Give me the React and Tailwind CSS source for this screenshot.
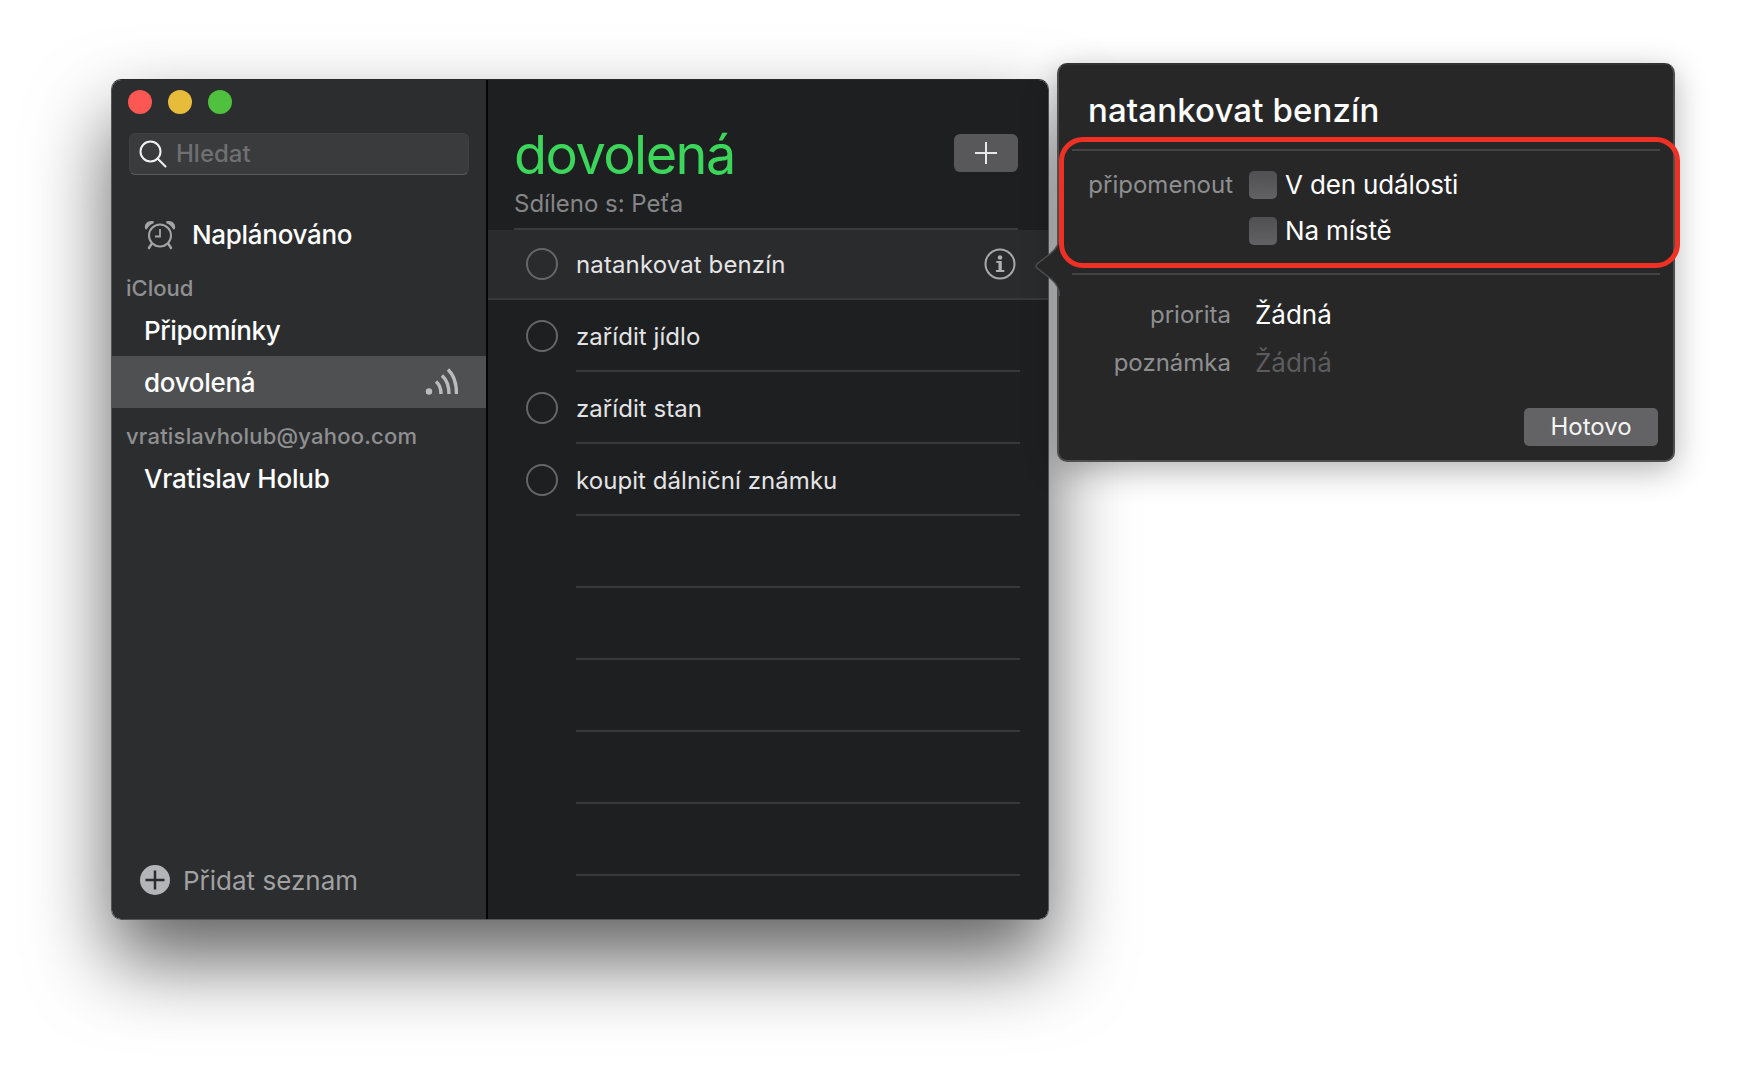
import React from "react";

function SearchIcon() {
  return (
    <svg width="28" height="28" viewBox="0 0 28 28" fill="none" stroke="#f2f2f2" strokeWidth="2" strokeLinecap="round">
      <circle cx="11.500" cy="11.500" r="10" />
      <path d="M18.500 18.500l8 8" />
    </svg>
  );
}

function AlarmIcon() {
  return (
    <svg width="32" height="30" viewBox="0 0 32 30" fill="none">
      <path d="M1 8.500C0 3.500 4 0 9.500 1.200 10 1.600 10 2.600 9.500 3.200 6.500 4.500 4.500 6.200 3 9 2.400 9.800 1.300 9.500 1 8.500z" fill="#a4a4a4" />
      <path d="M31 8.500C32 3.500 28 0 22.500 1.200 22 1.600 22 2.600 22.500 3.200 25.500 4.500 27.500 6.200 29 9 29.600 9.800 30.700 9.500 31 8.500z" fill="#a4a4a4" />
      <circle cx="16" cy="15.500" r="11" stroke="#a4a4a4" strokeWidth="2" />
      <path d="M16 9v7.500h-5" stroke="#a4a4a4" strokeWidth="1.800" />
      <path d="M7.500 24l-2.500 4M24.500 24l2.500 4" stroke="#a4a4a4" strokeWidth="2.400" strokeLinecap="round" />
    </svg>
  );
}

function SignalIcon() {
  return (
    <svg width="33" height="28" viewBox="0 0 33 28" fill="none" stroke="#bcbcbc" strokeWidth="3.400">
      <circle cx="4" cy="23.500" r="3.200" fill="#bcbcbc" stroke="none" />
      <path d="M11 13.500c3.500 3 5 7 5 12.500" />
      <path d="M17 7.500c5 4.500 7 10 7 18.500" />
      <path d="M23 1.500c6.500 6 8.500 14 8.500 24.500" />
    </svg>
  );
}

function InfoIcon() {
  return (
    <svg width="32" height="32" viewBox="0 0 32 32" fill="#b0b0b0">
      <circle cx="16" cy="16" r="14.500" fill="none" stroke="#a8a8a8" strokeWidth="2" />
      <circle cx="16" cy="9.500" r="2.300" />
      <rect x="14.500" y="13" width="3.300" height="10" />
      <rect x="12.300" y="13" width="4" height="1.900" />
      <rect x="12" y="22" width="8.300" height="2" />
    </svg>
  );
}

function Tail() {
  return (
    <svg width="26" height="60" viewBox="0 0 26 60" className="absolute left-[-24px] top-[171px]">
      <path d="M24.500 0C24.500 8 21 13 16 17L2 28C0.800 29.200 0.800 30.800 2 32L16 43C21 47 24.500 52 24.500 60V0Z" fill="#272728" />
      <path d="M24.500 0C24.500 8 21 13 16 17L2 28C0.800 29.200 0.800 30.800 2 32L16 43C21 47 24.500 52 24.500 60" fill="none" stroke="#4e4e50" strokeWidth="1.500" />
    </svg>
  );
}

const lists = ["natankovat benzín", "zařídit jídlo", "zařídit stan", "koupit dálniční známku", "", "", "", "", ""];

function Row({ text, index }) {
  const first = index === 0;
  return (
    <div className={first ? "h-[70px] flex bg-[#2a2b2d] border-b-2 border-[#38393b]" : "h-[72px] flex"}>
      <div className="w-[88px] flex items-center justify-center pl-[20px]">
        {text && <div className="w-[32px] h-[32px] rounded-full border-2 border-[#666668]" />}
      </div>
      <div className={first ? "flex-1 flex items-center justify-between pr-[32px]" : "flex-1 mr-[28px] flex items-center border-b-2 border-[#38393b]"}>
        <span className={first ? "text-[24px] leading-none tracking-[0.12px] text-[#e4e4e6] pt-[2px]" : "text-[24px] leading-none tracking-[0.06px] text-[#e4e4e6] pt-[4px]"}>{text}</span>
        {first && <InfoIcon />}
      </div>
    </div>
  );
}

export default function App() {
  return (
    <div className="relative w-[1746px] h-[1068px] bg-white overflow-hidden font-['Inter','Noto_Sans',sans-serif]">
      {/* main window */}
      <div className="absolute left-[111px] top-[79px] w-[938px] h-[841px] flex rounded-[10px] overflow-hidden border border-[#555557] border-t-[#2a2a2a] shadow-[0_40px_80px_rgba(0,0,0,0.62)]">
        <aside className="w-[374px] bg-[#2c2d2f] flex flex-col">
          <div className="flex gap-[16px] pl-[16px] pt-[10px]">
            <span className="w-[24px] h-[24px] rounded-full bg-[#fc5753]" />
            <span className="w-[24px] h-[24px] rounded-full bg-[#e8bc3b]" />
            <span className="w-[24px] h-[24px] rounded-full bg-[#4fc13f]" />
          </div>
          <div className="mt-[19px] mx-[17px] h-[42px] rounded-[6px] bg-[#3a3b3d] border border-[#3f4042] border-b-[#5a5b5d] flex items-center pl-[9px] gap-[9px]">
            <SearchIcon />
            <span className="text-[24px] leading-none font-medium text-[#6f7072]">Hledat</span>
          </div>
          <div className="mt-[35px] h-[50px] flex items-center pl-[32px] gap-[16px]">
            <AlarmIcon />
            <span className="text-[26px] leading-none font-medium tracking-[-0.3px] text-white">Naplánováno</span>
          </div>
          <div className="mt-[13px] h-[30px] flex items-center pl-[14px] text-[22px] leading-none font-medium text-[#8f9092]">iCloud</div>
          <div className="h-[53px] flex items-center pl-[32px] pt-[2px] text-[26px] font-medium tracking-[-0.4px] leading-none text-white">Připomínky</div>
          <div className="h-[52px] flex items-center justify-between pl-[32px] pr-[28px] bg-[#4f5052] text-[26px] leading-none font-medium text-white">
            <span className="pt-[2px] tracking-[-0.3px]">dovolená</span>
            <SignalIcon />
          </div>
          <div className="mt-[12px] h-[32px] flex items-center pl-[14px] text-[22px] leading-none font-medium tracking-[0.2px] text-[#8f9092]">vratislavholub@yahoo.com</div>
          <div className="mt-[1px] h-[52px] flex items-center pl-[32px] text-[26px] leading-none font-medium tracking-[-0.2px] text-white">Vratislav Holub</div>
          <div className="mt-auto mb-[19px] h-[40px] flex items-center pl-[28px] gap-[13px]">
            <svg width="30" height="30" viewBox="0 0 30 30">
              <circle cx="15" cy="15" r="15" fill="#b4b5b8" />
              <path d="M15 5.500v19M5.500 15h19" stroke="#2c2d2f" strokeWidth="2.500" />
            </svg>
            <span className="text-[26px] leading-none text-[#a0a1a3] pt-[2px]">Přidat seznam</span>
          </div>
        </aside>
        <div className="w-[2px] bg-[#050505]" />
        <main className="flex-1 bg-[#1e1f21] flex flex-col">
          <header className="h-[150px] flex flex-col pl-[26px] pr-[30px]">
            <div className="flex justify-between items-start pt-[48px]">
              <h1 className="text-[54px] leading-[54px] tracking-[-1.500px] text-[#3bd65a]">dovolená</h1>
              <button className="w-[64px] h-[38px] mt-[6px] rounded-[6px] bg-[#58585a] flex items-center justify-center">
                <svg width="24" height="24" viewBox="0 0 24 24"><path d="M12 1v22M1 12h22" stroke="#e8e8e8" strokeWidth="2" /></svg>
              </button>
            </div>
            <p className="mt-[7px] text-[24px] leading-[30px] text-[#858688]">Sdíleno s: Peťa</p>
            <div className="mt-auto h-[2px] bg-[#3a3b3d]" />
          </header>
          {lists.map((t, i) => (
            <Row key={i} text={t} index={i} />
          ))}
        </main>
      </div>

      {/* popover */}
      <div className="absolute left-[1057px] top-[63px] w-[618px] h-[399px] rounded-[10px] border-2 border-[#4e4e50] border-t-[#333335] bg-[#272728] shadow-[0_8px_32px_rgba(0,0,0,0.3)] flex flex-col">
        <Tail />
        <h2 className="mt-[25px] ml-[29px] text-[33px] leading-[40px] tracking-[0.12px] font-medium text-white">natankovat benzín</h2>
        <div className="mt-[19px] mx-[13px] h-[2px] bg-[#434345]" />
        <div className="mt-[19px] flex items-start">
          <span className="w-[174px] text-right text-[24px] leading-[30px] text-[#8e8f91]">připomenout</span>
          <div className="ml-[16px] flex flex-col gap-[16px] text-[26px] tracking-[-0.15px] leading-[30px]">
            <label className="flex items-center gap-[8px] text-white h-[30px]">
              <span className="w-[28px] h-[28px] rounded-[5px] bg-linear-to-b from-[#505052] to-[#626264]" />
              V den události
            </label>
            <label className="flex items-center gap-[8px] text-white h-[30px]">
              <span className="w-[28px] h-[28px] rounded-[5px] bg-linear-to-b from-[#505052] to-[#626264]" />
              Na místě
            </label>
          </div>
        </div>
        <div className="mt-[27px] mx-[13px] h-[2px] bg-[#434345]" />
        <div className="mt-[25px] grid grid-cols-[172px_1fr] gap-x-[24px] gap-y-[18px] text-[24px] leading-[30px]">
          <span className="text-right text-[#8e8f91]">priorita</span>
          <span className="text-white text-[26px]">Žádná</span>
          <span className="text-right text-[#8e8f91]">poznámka</span>
          <span className="text-[#5c5c5e] text-[26px]">Žádná</span>
        </div>
        <div className="mt-auto mb-[14px] mr-[15px] flex justify-end">
          <button className="w-[134px] h-[38px] rounded-[5px] bg-[#636365] text-[24px] leading-none text-[#f4f4f4]">Hotovo</button>
        </div>
      </div>

      {/* red annotation */}
      <div className="absolute left-[1059px] top-[137px] w-[621px] h-[131px] rounded-[24px] border-[5px] border-[#ee3124]" />
    </div>
  );
}
